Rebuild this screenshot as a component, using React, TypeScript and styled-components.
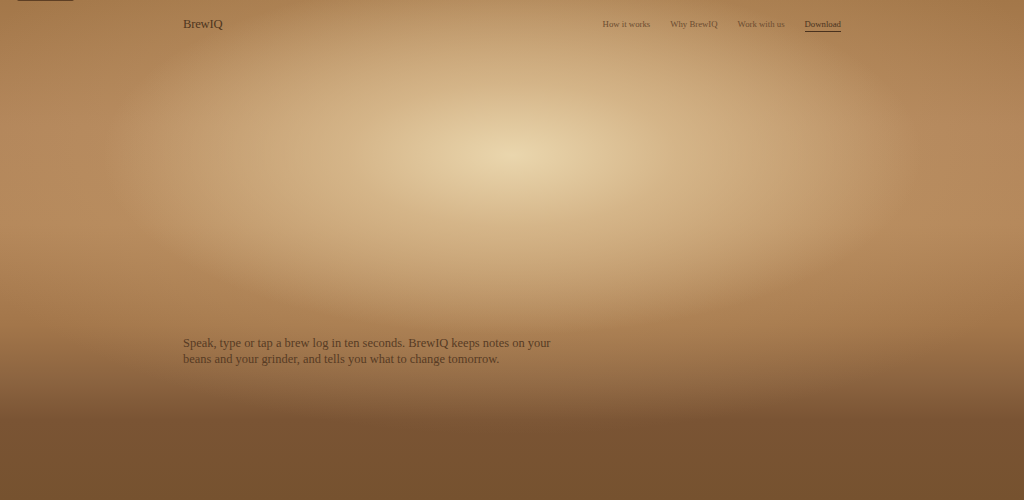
import React from "react";
import styled, { createGlobalStyle } from "styled-components";

const Global = createGlobalStyle`
  html, body { margin: 0; padding: 0; }
  body { font-family: "Liberation Serif", "DejaVu Serif", serif; }
  * { box-sizing: border-box; }
`;

const Page = styled.div`
  position: relative;
  min-height: 500px;
  overflow: hidden;
  background:
    radial-gradient(ellipse 40% 36% at 50% 31%, rgba(234, 214, 173, 1) 0%, rgba(222, 194, 150, 0.72) 40%, rgba(200, 158, 110, 0) 100%),
    radial-gradient(ellipse 58% 55% at 50% 32%, rgba(198, 158, 110, 0.75) 0%, rgba(190, 146, 96, 0) 100%),
    linear-gradient(180deg, #a37749 0%, #b2855a 25%, #b4875a 45%, #a3764a 65%, #8c6440 76%, #7a5434 84%, #76522f 100%);
`;

const SkipLink = styled.a`
  position: absolute;
  left: 17px;
  top: -30px;
  width: 57px;
  height: 31px;
  background: #5e3f24;
  border-radius: 0 0 2px 2px;
`;

const Container = styled.div`
  width: 658px;
  margin: 0 auto;
`;

const Header = styled.header`
  display: flex;
  align-items: center;
  justify-content: space-between;
  height: 48px;
`;

const Brand = styled.a`
  font-size: 12.6px;
  color: #4f3620;
  text-decoration: none;
  letter-spacing: -0.2px;
`;

const Nav = styled.nav`
  display: flex;
  gap: 20px;
  align-items: center;
`;

const NavLink = styled.a<{ $active?: boolean }>`
  font-size: 8.75px;
  color: ${(p) => (p.$active ? "#4a321e" : "#6b4c30")};
  text-decoration: none;
  padding-bottom: 2px;
  border-bottom: 1px solid ${(p) => (p.$active ? "#4a321e" : "transparent")};
  margin-top: 3px;
`;

const Hero = styled.section`
  padding-top: 287px;
`;

const Lede = styled.p`
  margin: 0;
  max-width: 380px;
  font-size: 12.45px;
  line-height: 16px;
  color: #573b24;
`;

export default function App() {
  return (
    <>
      <Global />
      <Page>
        <SkipLink href="#main" aria-label="Skip to content" />
        <Container>
          <Header>
            <Brand href="#">BrewIQ</Brand>
            <Nav>
              <NavLink href="#">How it works</NavLink>
              <NavLink href="#">Why BrewIQ</NavLink>
              <NavLink href="#">Work with us</NavLink>
              <NavLink href="#" $active>Download</NavLink>
            </Nav>
          </Header>
          <Hero id="main">
            <Lede>
              Speak, type or tap a brew log in ten seconds. BrewIQ keeps notes on your beans and your grinder, and tells you what to change tomorrow.
            </Lede>
          </Hero>
        </Container>
      </Page>
    </>
  );
}
